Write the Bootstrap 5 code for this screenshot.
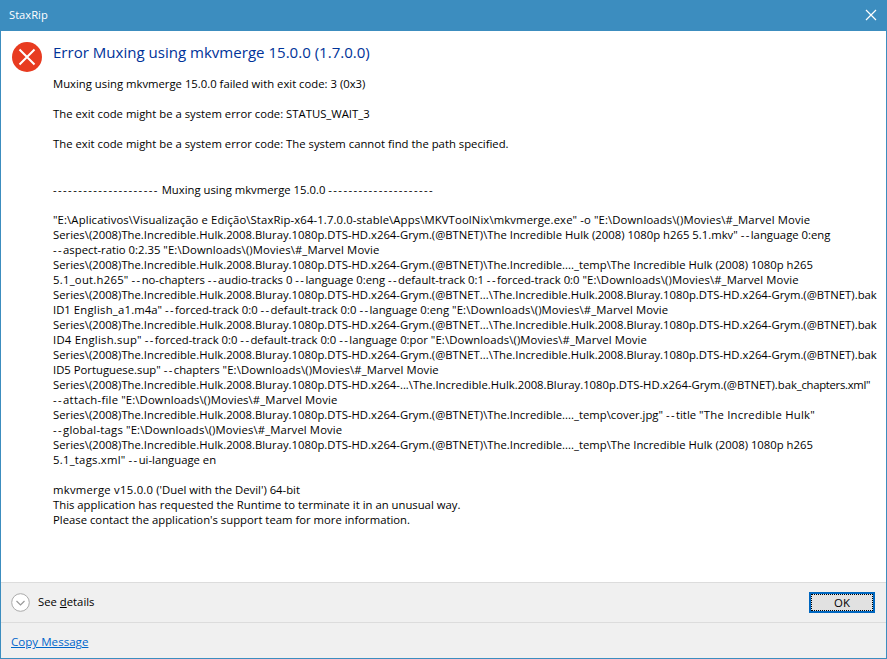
<!DOCTYPE html>
<html lang="en"><head><meta charset="utf-8">
<link href="https://cdn.jsdelivr.net/npm/bootstrap@5.3.0/dist/css/bootstrap.min.css" rel="stylesheet">
<style>
html,body{height:100%;margin:0;overflow:hidden}
body{font-family:"Open Sans","Noto Sans",sans-serif;font-size:11.3px;color:#000;background:#fff}
.win-frame{height:659px;border:1px solid #3c8dbf;border-top:0}
.win-title{height:31px;flex:none;background:#3c8dbf;color:#fff;font-size:11.2px;padding-left:9px;margin:0 -1px}
.main-pane{padding:11px 0 0 11px;gap:11px;min-height:0}
.err-icon{width:30px;height:30px;flex:none}
.msg-title{color:#003399;font-size:15.05px;line-height:20px;margin:0 0 14px;font-weight:400}
.msg-body{line-height:15px;white-space:nowrap}
.msg-body p{margin:0 0 15px}
.msg-body .rule-p{padding-top:16px}
.dd{letter-spacing:1.4px}
.pth,.fs{letter-spacing:.12px}
.wd{letter-spacing:.25px}
.nr{letter-spacing:-.3px}
.foot-a{height:41px;flex:none;background:#f0f0f0;border-top:1px solid #dcdcdc;border-bottom:1px solid #dcdcdc;padding:0 11px 0 10px}
.foot-b{height:35px;flex:none;background:#f0f0f0;padding:3px 0 0 10px}
.chev{width:19px;height:19px}
.ok-btn{width:66px;height:21px;background:#e1e1e1;border:2px solid #0067c0;font-size:11.4px;line-height:13px;padding:0;color:#000;border-radius:0;outline:1px dotted #000;outline-offset:-3px}
.copy-a{color:#0066cc;font-size:11.6px}
.und{text-decoration:underline}
</style></head><body>
<div class="win-frame d-flex flex-column">
<div class="win-title d-flex align-items-center justify-content-between">
<span>StaxRip</span>
<svg width="32" height="31" viewBox="0 0 32 31"><path d="M11 10l10 10M21 10l-10 10" stroke="#fff" stroke-width="1.2"/></svg>
</div>
<div class="main-pane d-flex flex-grow-1">
<svg class="err-icon" viewBox="0 0 30 30"><circle cx="15" cy="15" r="15" fill="#e83b20"/><path d="M7.500 7.500l15 15M22.500 7.500l-15 15" stroke="#fff" stroke-width="2"/></svg>
<div>
<h1 class="msg-title">Error Muxing using mkvmerge 15.0.0 (1.7.0.0)</h1>
<div class="msg-body">
<p>Muxing using mkvmerge 15.0.0 failed with exit code: 3 (0x3)</p>
<p>The exit code might be a system error code: STATUS_WAIT_3</p>
<p>The exit code might be a system error code: The system cannot find the path specified.</p>
<p class="rule-p"><span class="dd">---------------------</span> Muxing using mkvmerge 15.0.0 <span class="dd">---------------------</span></p>
<p><span class="fs">"E:\Aplicativos\Visualização e Edição\StaxRip-x64-1.7.0.0-stable\Apps\MKVToolNix\mkvmerge.exe" -o</span> <span class="pth">"E:\Downloads\()Movies\#_Marvel Movie</span><br>
Series\(2008)The.Incredible.Hulk.2008.Bluray.1080p.DTS-HD.x264-Grym.(@BTNET)\The Incredible Hulk (2008) 1080p h265 5.1.mkv" <span class="dd">--</span>language 0:eng<br>
<span class="dd">--</span>aspect-ratio 0:2.35 <span class="pth">"E:\Downloads\()Movies\#_Marvel Movie</span><br>
Series\(2008)The.Incredible.Hulk.2008.Bluray.1080p.DTS-HD.x264-Grym.(@BTNET)\The.Incredible...._temp\The Incredible Hulk (2008) 1080p h265<br>
<span class="wd">5.1_out.h265"</span> <span class="dd">--</span>no-chapters <span class="dd">--</span>audio-tracks 0 <span class="dd">--</span>language 0:eng <span class="dd">--</span>default-track 0:1 <span class="dd">--</span>forced-track 0:0 <span class="pth">"E:\Downloads\()Movies\#_Marvel Movie</span><br>
Series\(2008)The.Incredible.Hulk.2008.Bluray.1080p.DTS-HD.x264-Grym.(@BTNET...\The.Incredible.Hulk.2008.Bluray.1080p.DTS-HD.x264-Grym.(@BTNET).bak<br>
ID1 <span class="wd">English_a1</span>.m4a" <span class="dd">--</span>forced-track 0:0 <span class="dd">--</span>default-track 0:0 <span class="dd">--</span>language 0:eng <span class="pth">"E:\Downloads\()Movies\#_Marvel Movie</span><br>
Series\(2008)The.Incredible.Hulk.2008.Bluray.1080p.DTS-HD.x264-Grym.(@BTNET...\The.Incredible.Hulk.2008.Bluray.1080p.DTS-HD.x264-Grym.(@BTNET).bak<br>
<span class="wd">ID4 English.sup"</span> <span class="dd">--</span>forced-track 0:0 <span class="dd">--</span>default-track 0:0 <span class="dd">--</span>language 0:por <span class="pth">"E:\Downloads\()Movies\#_Marvel Movie</span><br>
Series\(2008)The.Incredible.Hulk.2008.Bluray.1080p.DTS-HD.x264-Grym.(@BTNET...\The.Incredible.Hulk.2008.Bluray.1080p.DTS-HD.x264-Grym.(@BTNET).bak<br>
ID5 Portuguese.sup" <span class="dd">--</span>chapters <span class="pth">"E:\Downloads\()Movies\#_Marvel Movie</span><br>
Series\(2008)The.Incredible.Hulk.2008.Bluray.1080p.DTS-HD.x264-...\The.Incredible.Hulk.2008.Bluray.1080p.DTS-HD.x264-Grym.(@BTNET).bak<span class="nr">_chapters.xml"</span><br>
<span class="dd">--</span><span class="wd">attach-file</span> <span class="pth">"E:\Downloads\()Movies\#_Marvel Movie</span><br>
Series\(2008)The.Incredible.Hulk.2008.Bluray.1080p.DTS-HD.x264-Grym.(@BTNET)\The.Incredible...._temp\cover.jpg" <span class="dd">--</span>title <span class="wd">"The Incredible Hulk"</span><br>
<span class="dd">--</span><span class="wd">global-tags</span> <span class="pth">"E:\Downloads\()Movies\#_Marvel Movie</span><br>
Series\(2008)The.Incredible.Hulk.2008.Bluray.1080p.DTS-HD.x264-Grym.(@BTNET)\The.Incredible...._temp\The Incredible Hulk (2008) 1080p h265<br>
<span class="wd">5.1_tags.xml"</span> <span class="dd">--</span>ui-language en</p>
<p><span class="wd">mkvmerge v15.0.0</span> ('Duel with the Devil') 64-bit<br>
This application has requested the Runtime to terminate it in an unusual way.<br>
Please contact the application's support team for more information.</p>
</div></div></div>
<div class="foot-a d-flex align-items-center justify-content-between">
<div class="d-flex align-items-center gap-2"><svg class="chev" viewBox="0 0 19 19"><circle cx="9.500" cy="9.500" r="8.800" fill="#fff" stroke="#aaa"/><path d="M5.500 8l4 4 4-4" fill="none" stroke="#999" stroke-width="1.200"/></svg><span>See <span class="und">d</span>etails</span></div>
<button class="btn ok-btn" type="button">OK</button>
</div>
<div class="foot-b d-flex align-items-center"><a href="#" class="copy-a">Copy Message</a></div>
</div>
</body></html>
